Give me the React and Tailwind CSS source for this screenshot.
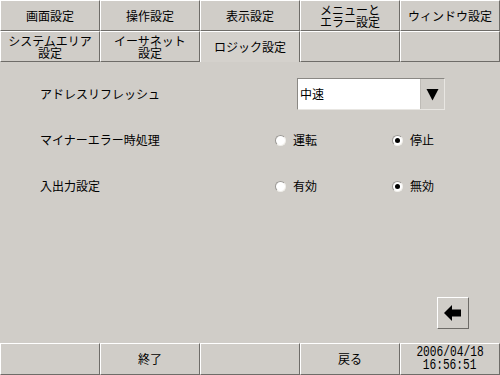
import React from "react";

const jp = { fontFamily: '"Noto Sans CJK JP", "Noto Sans", sans-serif' };

function Tab({ children, active }) {
  if (active) {
    return (
      <div className="w-[100px] h-full flex items-center justify-center border-t border-l border-r border-t-white border-l-white border-r-[#6e6c68] bg-[#d4d1cc] text-[12px] leading-[12px] text-black text-center">
        {children}
      </div>
    );
  }
  return (
    <div className="w-[100px] h-full flex items-center justify-center border border-t-white border-l-white border-r-[#6e6c68] border-b-[#6e6c68] text-[12px] leading-[12px] text-black text-center">
      {children}
    </div>
  );
}

function Radio({ checked, label }) {
  return (
    <div className="flex items-center">
      <div className="w-[11px] h-[11px] rounded-full bg-white border border-t-[#9a9894] border-l-[#9a9894] border-r-[#f0eeea] border-b-[#f0eeea] flex items-center justify-center">
        {checked && <div className="w-[5px] h-[5px] rounded-full bg-black" />}
      </div>
      <span className="ml-[7px] text-[12px] leading-[12px]">{label}</span>
    </div>
  );
}

function BottomBtn({ children, className = "" }) {
  return (
    <div className={"w-[100px] h-full flex items-center justify-center border border-t-white border-l-white border-r-[#6e6c68] border-b-[#6e6c68] text-[12px] " + className}>
      {children}
    </div>
  );
}

export default function App() {
  const mono = { fontFamily: '"Liberation Mono", "DejaVu Sans Mono", monospace' };
  return (
    <div className="w-[500px] h-[375px] bg-[#d0cdc8] flex flex-col text-black overflow-hidden" style={jp}>
      <div className="flex h-[31px]">
        <Tab>画面設定</Tab>
        <Tab>操作設定</Tab>
        <Tab>表示設定</Tab>
        <Tab>メニューと<br />エラー設定</Tab>
        <Tab>ウィンドウ設定</Tab>
      </div>
      <div className="flex h-[31px]">
        <Tab>システムエリア<br />設定</Tab>
        <Tab>イーサネット<br />設定</Tab>
        <Tab active>ロジック設定</Tab>
        <Tab> </Tab>
        <Tab> </Tab>
      </div>
      <div className="flex-1 flex flex-col pt-[16px]">
        <div className="flex items-center h-[32px]">
          <div className="w-[297px] pl-[40px] text-[12px]">アドレスリフレッシュ</div>
          <div className="w-[148px] h-[32px] bg-white border border-t-[#8a8884] border-l-[#8a8884] border-r-[#e8e6e2] border-b-[#e8e6e2] flex items-center">
            <span className="pl-[2px] flex-1 text-[12px]">中速</span>
            <div className="w-[24px] h-[30px] bg-[#d0cdc8] border-l border-[#bebbb6] flex items-center justify-center">
              <svg width="13" height="13" viewBox="0 0 13 13">
                <path d="M0.5 1 H12.5 L6.5 12.5 Z" fill="black" />
              </svg>
            </div>
          </div>
        </div>
        <div className="flex items-center h-[32px] mt-[14px]">
          <div className="w-[275px] pl-[40px] text-[12px]">マイナーエラー時処理</div>
          <div className="w-[117px]"><Radio label="運転" /></div>
          <Radio checked label="停止" />
        </div>
        <div className="flex items-center h-[32px] mt-[14px]">
          <div className="w-[275px] pl-[40px] text-[12px]">入出力設定</div>
          <div className="w-[117px]"><Radio label="有効" /></div>
          <Radio checked label="無効" />
        </div>
        <div className="flex-1" />
        <div className="flex justify-end pr-[31px] mb-[14px]">
          <div className="w-[32px] h-[32px] border border-t-white border-l-white border-r-[#6e6c68] border-b-[#6e6c68] flex items-center justify-center">
            <svg width="18" height="16" viewBox="0 0 18 16">
              <path d="M0 8 L8 0 V4.5 H17 V11.5 H8 V16 Z" fill="black" />
            </svg>
          </div>
        </div>
      </div>
      <div className="flex h-[32px]">
        <BottomBtn />
        <BottomBtn>終了</BottomBtn>
        <BottomBtn />
        <BottomBtn>戻る</BottomBtn>
        <BottomBtn className="flex-col">
          <span className="block text-[14px] leading-[13px] scale-x-[0.8]" style={mono}>2006/04/18</span>
          <span className="block text-[14px] leading-[13px] scale-x-[0.8]" style={mono}>16:56:51</span>
        </BottomBtn>
      </div>
    </div>
  );
}
